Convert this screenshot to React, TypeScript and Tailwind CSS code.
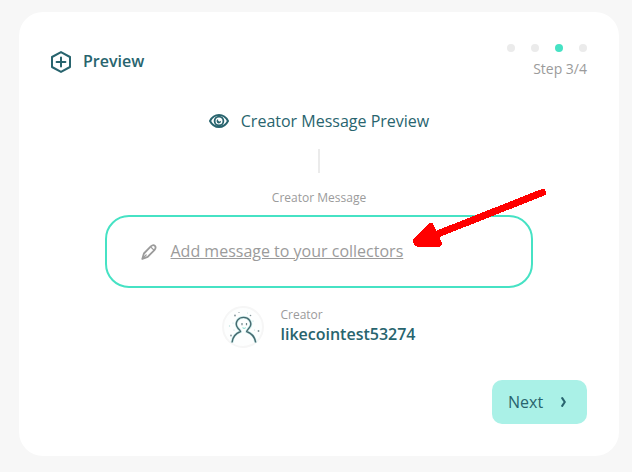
import React from "react";

function HexPlusIcon() {
  return (
    <svg width="20" height="22" viewBox="0 0 20 22" fill="none" stroke="#28646e" strokeWidth="2" strokeLinejoin="round" strokeLinecap="round">
      <path d="M10 1.1 19 6v10l-9 4.9L1 16V6z" />
      <path d="M10 6.600v8.800M5.600 11h8.800" />
    </svg>
  );
}

function EyeIcon() {
  return (
    <svg width="20" height="14" viewBox="0 0 20 14" fill="none">
      <path d="M1 7c2-3.900 5.200-6 9-6s7 2.100 9 6c-2 3.900-5.200 6-9 6S3 10.900 1 7z" stroke="#28646e" strokeWidth="2" strokeLinejoin="round" />
      <circle cx="10" cy="7" r="4.400" stroke="#28646e" strokeWidth="1.800" />
      <path d="M9.200 4.900a1.600 1.600 0 0 0 2.900 1.600A2.300 2.300 0 1 1 9.200 4.900z" fill="#28646e" />
    </svg>
  );
}

function PenIcon() {
  return (
    <svg width="16" height="16" viewBox="0 0 16 16" fill="none" stroke="#9b9b9b" strokeWidth="1.800" strokeLinejoin="round" strokeLinecap="round">
      <path d="M1.300 14.900 2.900 9.500 9.800 2.400q2.500-2.200 4.100-.5 1.600 1.800-.5 4.200L6.700 12.800z" />
      <path d="m10.200 3.400 2.500 2.500" strokeWidth="1.300" />
      <path d="M1.600 14.500 5.200 10.900" strokeWidth="1.300" />
    </svg>
  );
}

function Avatar() {
  return (
    <svg width="42" height="42" viewBox="0 0 42 42" fill="none">
      <circle cx="21" cy="21" r="20" fill="#fdfefe" stroke="#f6f6f6" strokeWidth="2" />
      <path d="M10 36.500c.5-5.500 3.500-9 8.500-11-.2-1.300-1.400-2-2.500-3.200-2-2.500-2-6-.4-8.200 3-3.700 9.200-3.600 12 .2 1.700 2.700 1.300 6-.7 8-1 1.200-2 2-2.200 3.200 5 2 8.300 5.500 9 11" stroke="#cceeec" strokeWidth="2.800" />
      <path d="M10 36.500c.5-5.500 3.500-9 8.500-11-.2-1.300-1.400-2-2.500-3.200-2-2.500-2-6-.4-8.200 3-3.700 9.200-3.600 12 .2 1.700 2.700 1.300 6-.7 8-1 1.200-2 2-2.200 3.200 5 2 8.300 5.500 9 11" stroke="#46696f" strokeWidth="1.400" />
      <path d="M20 17v2.200M24.500 17v2.200" stroke="#70888c" strokeWidth="1.200" />
      <path d="M20.500 21.800q1.800 1.200 3.200 0" stroke="#72d9ca" />
      <g fill="#85959a">
        <circle cx="13" cy="9.500" r=".9" />
        <circle cx="17" cy="6.500" r=".6" />
        <circle cx="28.500" cy="9.500" r=".8" />
        <circle cx="9" cy="29.500" r=".9" />
        <circle cx="36.500" cy="25" r=".9" />
      </g>
      <g fill="#b9dedb">
        <circle cx="7.500" cy="20" r=".7" />
        <circle cx="11" cy="17" r=".5" />
        <circle cx="25.500" cy="7" r=".5" />
        <circle cx="31" cy="15" r=".6" />
        <circle cx="32.500" cy="24" r=".6" />
        <circle cx="12" cy="24" r=".6" />
      </g>
    </svg>
  );
}

export default function App() {
  return (
    <main className="relative h-[472px] w-[632px] overflow-hidden bg-[#f7f7f7] pt-3 pl-[19px] font-['Open_Sans',sans-serif] text-[#28646e]">
      <section className="flex h-[444px] w-[600px] flex-col rounded-3xl bg-white p-8">
        <header className="flex items-center justify-between">
          <h1 className="flex items-center gap-3 text-base font-semibold">
            <HexPlusIcon />
            <span className="pb-0.5">Preview</span>
          </h1>
          <div className="flex flex-col items-end gap-[7px]">
            <div className="flex gap-4">
              <span className="size-2 rounded-full bg-[#ebebeb]" />
              <span className="size-2 rounded-full bg-[#ebebeb]" />
              <span className="size-2 rounded-full bg-[#46e2c4]" />
              <span className="size-2 rounded-full bg-[#ebebeb]" />
            </div>
            <p className="text-sm leading-5 text-[#9b9b9b]">Step 3/4</p>
          </div>
        </header>

        <div className="mt-[30px] flex flex-col items-center">
          <h2 className="flex items-center gap-3 text-base leading-6">
            <EyeIcon />
            Creator Message Preview
          </h2>
          <div className="mt-4 h-6 w-0.5 bg-[#ebebeb]" />
          <p className="mt-[17px] text-xs leading-4 text-[#9b9b9b]">Creator Message</p>
          <div className="mt-[9px] flex h-[73px] w-[428px] items-center gap-[14px] rounded-3xl border-2 border-[#46e2c4] pl-[33.500px] text-base text-[#9b9b9b]">
            <PenIcon />
            <a className="pb-0.5 underline">Add message to your collectors</a>
          </div>
          <div className="mt-[18px] flex items-center gap-4">
            <Avatar />
            <div className="pb-0.5">
              <p className="text-xs leading-4 text-[#9b9b9b]">Creator</p>
              <p className="text-base leading-[22px] font-semibold">likecointest53274</p>
            </div>
          </div>
        </div>

        <button className="mt-auto flex h-11 w-[95px] items-center justify-between self-end rounded-[10px] bg-[#aaf1e7] pr-5 pl-4 text-base">
          Next
          <svg width="7" height="10" viewBox="0 0 7 10" fill="none" stroke="#28646e" strokeWidth="2.100" strokeLinecap="round" strokeLinejoin="round">
            <path d="M2.200 1.200 4.800 5 2.200 8.800" />
          </svg>
        </button>
      </section>

      <svg className="absolute top-[180px] left-[405px]" width="150" height="75" viewBox="405 180 150 75" shapeRendering="crispEdges">
        <path d="M542.500 192.500 435 235" stroke="#f00" strokeWidth="7" strokeLinecap="round" />
        <path d="M430.500 226.500 416.500 241l1 2.200 21 .3z" fill="#f00" stroke="#f00" strokeWidth="7" strokeLinejoin="round" />
      </svg>
    </main>
  );
}
